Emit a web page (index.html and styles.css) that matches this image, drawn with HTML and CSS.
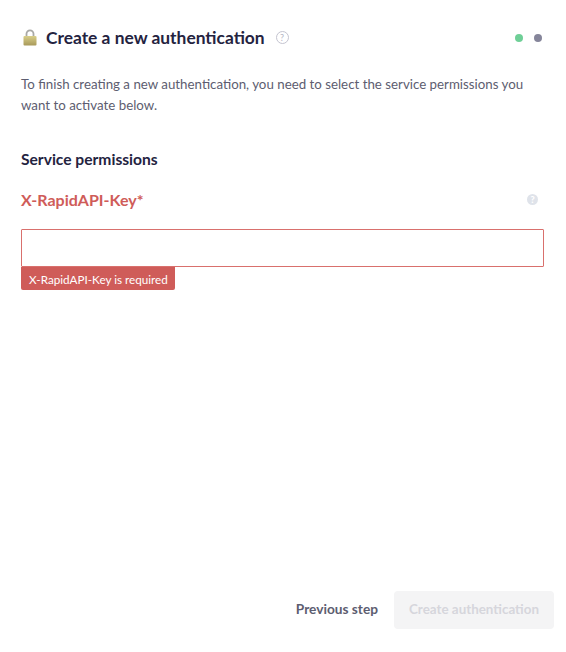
FILE: index.html
```html
<!DOCTYPE html>
<html lang="en">
<head>
    <meta charset="UTF-8">
    <title>Create a new authentication</title>
    <link rel="stylesheet" href="styles.css">
</head>
<body>
    <div class="wizard">
        <div class="wizard__header">
            <svg class="lock" width="14" height="17" viewBox="0 0 14 17">
                <defs>
                    <linearGradient id="lockBody" x1="0" y1="0" x2="0" y2="1">
                        <stop offset="0" stop-color="#d9cf8a"/>
                        <stop offset="1" stop-color="#a8995a"/>
                    </linearGradient>
                </defs>
                <path d="M3.5 8V4.8a3.5 3.5 0 0 1 7 0V8" fill="none" stroke="#a9a9a6" stroke-width="1.8"/>
                <rect x="0.5" y="7" width="13" height="9.5" rx="1" fill="url(#lockBody)"/>
            </svg>
            <h1 class="wizard__title">Create a new authentication</h1>
            <span class="help-outline">?</span>
            <div class="steps">
                <span class="steps__dot steps__dot--done"></span>
                <span class="steps__dot"></span>
            </div>
        </div>

        <p class="wizard__intro">To finish creating a new authentication, you need to select the service permissions you want to activate below.</p>

        <h2 class="wizard__section">Service permissions</h2>

        <div class="field">
            <div class="field__top">
                <label class="field__label">X-RapidAPI-Key*</label>
                <span class="help-solid">?</span>
            </div>
            <div class="field__box">
                <input type="text" class="field__input">
            </div>
            <div class="field__error">X-RapidAPI-Key is required</div>
        </div>

        <div class="wizard__footer">
            <button class="btn-back">Previous step</button>
            <button class="btn-create" disabled>Create authentication</button>
        </div>
    </div>
</body>
</html>
```

FILE: styles.css
```css
* {
    box-sizing: border-box;
}

body {
    margin: 0;
    background-color: #fff;
    font-family: 'Lato', sans-serif;
}

.wizard {
    display: flex;
    flex-direction: column;
    height: 652px;
    padding: 28px 12px 23px 21px;
}

.wizard__header {
    display: flex;
    align-items: center;
    height: 19px;
}

.lock {
    margin-left: 2px;
    margin-right: 9px;
}

.wizard__title {
    margin: 0 0 1px;
    font-size: 17.4px;
    font-weight: 700;
    color: #24233f;
}

.help-outline {
    display: flex;
    justify-content: center;
    align-items: center;
    width: 13px;
    height: 13px;
    margin-left: 11px;
    border: 1px solid #c4c4d0;
    border-radius: 50%;
    font-size: 9px;
    color: #b5b5c4;
}

.steps {
    display: flex;
    gap: 11px;
    margin-left: auto;
    margin-right: 12px;
}

.steps__dot {
    width: 8px;
    height: 8px;
    border-radius: 50%;
    background-color: #85859a;
}

.steps__dot--done {
    background-color: #6fcf97;
}

.wizard__intro {
    margin: 27px 0 0;
    width: 515px;
    font-size: 13.3px;
    line-height: 21px;
    color: #5d5d70;
}

.wizard__section {
    margin: 33px 0 0;
    font-size: 15.6px;
    line-height: 20px;
    font-weight: 700;
    color: #24233f;
}

.field {
    width: 523px;
    margin-top: 20px;
}

.field__top {
    display: flex;
    justify-content: space-between;
    align-items: center;
    height: 20px;
}

.field__label {
    font-size: 16px;
    font-weight: 700;
    color: #cf5c59;
}

.help-solid {
    display: flex;
    justify-content: center;
    align-items: center;
    width: 11px;
    height: 11px;
    margin-right: 6px;
    border-radius: 50%;
    background-color: #dfe3ea;
    font-size: 9px;
    font-weight: 900;
    color: #fff;
}

.field__box {
    height: 38px;
    margin-top: 20px;
    border: 1px solid #d9706d;
    border-radius: 1px;
}

.field__input {
    display: block;
    width: 100%;
    height: 100%;
    border: none;
    outline: none;
    background: none;
}

.field__error {
    width: 154px;
    height: 23px;
    padding-left: 8px;
    border-radius: 0 0 2px 2px;
    background-color: #cf5c59;
    font-size: 11.7px;
    line-height: 25px;
    color: #fff;
}

.wizard__footer {
    display: flex;
    justify-content: flex-end;
    align-items: center;
    gap: 16px;
    margin-top: auto;
}

button {
    font-family: inherit;
    font-size: 13.7px;
    font-weight: 700;
    border: none;
}

.btn-back {
    padding: 0 0 3px;
    background: none;
    color: #5d5d70;
    cursor: pointer;
}

.btn-create {
    width: 160px;
    height: 38px;
    padding-bottom: 3px;
    border-radius: 4px;
    font-size: 13.4px;
    background-color: #f4f4f5;
    color: #d6d6dc;
}
```
